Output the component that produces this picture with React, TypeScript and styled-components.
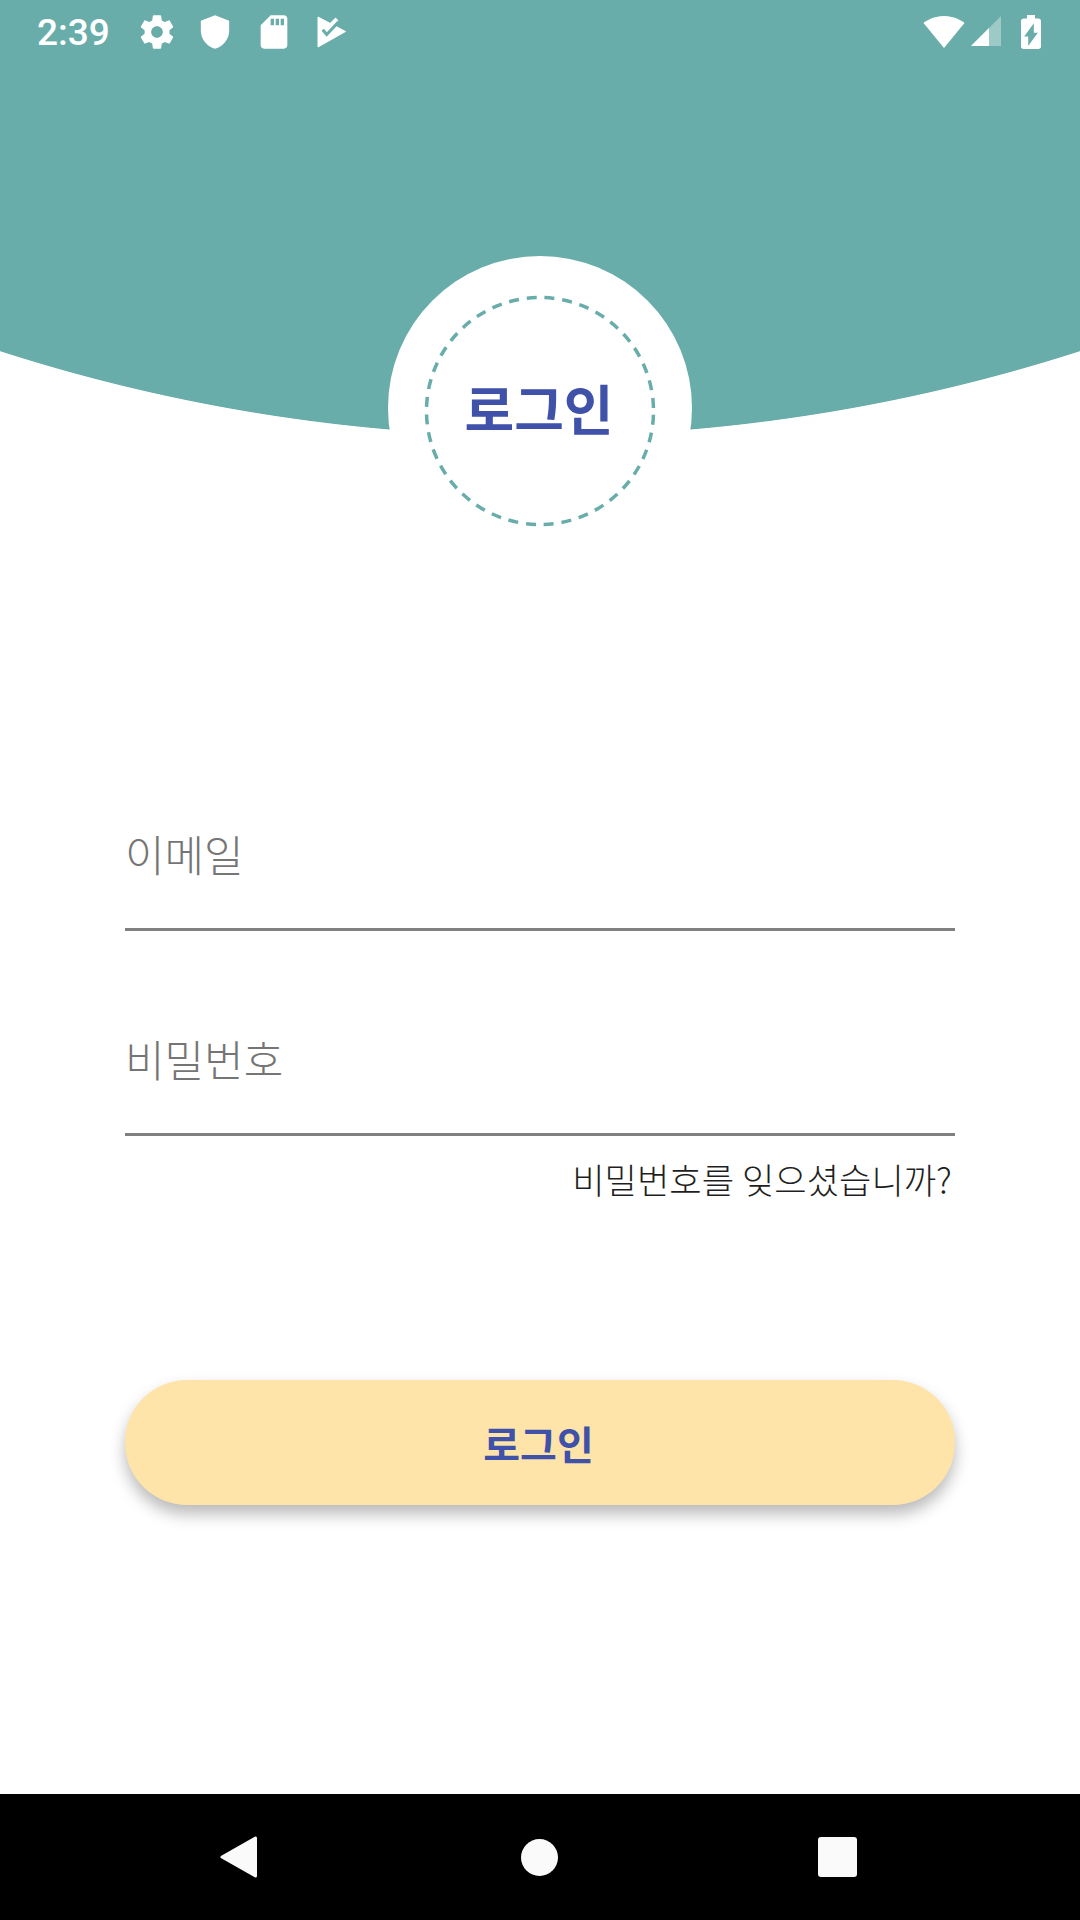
import styled, { createGlobalStyle } from 'styled-components';

const TEAL = '#69adaa';
const INDIGO = '#3f51a9';
const CJK = '"Noto Sans CJK KR", "Noto Sans", sans-serif';

const GlobalStyle = createGlobalStyle`
  html, body {
    margin: 0;
    padding: 0;
    background: #fff;
  }
`;

const Page = styled.div`
  width: 1080px;
  height: 1920px;
  display: flex;
  flex-direction: column;
  overflow: hidden;
  background: #fff;
  font-family: ${CJK};
`;

const Hero = styled.header`
  height: 560px;
  flex-shrink: 0;
  display: flex;
  flex-direction: column;
  align-items: center;
  background: radial-gradient(circle 1762px at 50% -1325.6px, ${TEAL} 99.95%, transparent 100%);
`;

const StatusBar = styled.div`
  width: 100%;
  height: 63px;
  box-sizing: border-box;
  padding: 0 39px 0 37px;
  display: flex;
  align-items: center;
  color: #fff;
`;

const Time = styled.span`
  width: 99.5px;
  padding-top: 2px;
  font-family: Roboto, sans-serif;
  font-size: 37px;
  font-weight: 500;
  line-height: 61px;
`;

const Notifications = styled.div`
  display: flex;
  align-items: center;
  gap: 18.5px;
`;

const SystemIcons = styled.div`
  margin-left: auto;
  display: flex;
  align-items: center;
`;

const Badge = styled.div`
  margin-top: 193px;
  width: 304px;
  height: 304px;
  flex-shrink: 0;
  border-radius: 50%;
  background: #fff;
  display: flex;
  align-items: center;
  justify-content: center;
  position: relative;
`;

const Ring = styled.svg`
  position: absolute;
  top: 37px;
  left: 34px;
`;

const Title = styled.h1`
  margin: 0 2px 0 0;
  font-size: 54px;
  font-weight: 700;
  line-height: 1;
  color: ${INDIGO};
`;

const Form = styled.form`
  padding: 0 125px;
  display: flex;
  flex-direction: column;
`;

const Field = styled.div<{ $top: number }>`
  height: 120px;
  margin-top: ${(p) => p.$top}px;
  border-bottom: 3px solid #808080;
  display: flex;
  align-items: flex-start;
`;

const Placeholder = styled.span`
  padding-top: 24px;
  font-size: 43px;
  font-weight: 300;
  line-height: 1;
  color: #757575;
`;

const Forgot = styled.a`
  align-self: flex-end;
  margin-top: 19px;
  padding-right: 3px;
  font-size: 35.2px;
  font-weight: 300;
  line-height: 48px;
  color: #1f1f1f;
`;

const SubmitButton = styled.button`
  margin-top: 177px;
  height: 125px;
  padding: 0 3px 0 0;
  border: 0;
  border-radius: 62px;
  background: #fee4a9;
  box-shadow: 0 9px 16px rgba(0, 0, 0, 0.28);
  font-family: ${CJK};
  font-size: 40px;
  font-weight: 700;
  color: ${INDIGO};
`;

const NavBar = styled.nav`
  margin-top: auto;
  height: 126px;
  flex-shrink: 0;
  box-sizing: border-box;
  padding-left: 220px;
  background: #000;
  display: flex;
  align-items: center;
  gap: 260px;
`;

const NavCircle = styled.span`
  width: 37px;
  height: 37px;
  border-radius: 50%;
  background: #fafafa;
`;

const NavSquare = styled.span`
  width: 39px;
  height: 40px;
  border-radius: 3px;
  background: #fafafa;
`;

function Icon({ d }: { d: string }) {
  return (
    <svg width="40" height="40" viewBox="0 0 24 24" fill="#fff">
      <path d={d} />
    </svg>
  );
}

const GEAR =
  'M19.43 12.98c.04-.32.07-.64.07-.98s-.03-.66-.07-.98l2.11-1.65c.19-.15.24-.42.12-.64l-2-3.46c-.12-.22-.39-.3-.61-.22l-2.49 1c-.52-.4-1.08-.73-1.69-.98l-.38-2.65C14.46 2.18 14.25 2 14 2h-4c-.25 0-.46.18-.49.42l-.38 2.65c-.61.25-1.17.59-1.69.98l-2.49-1c-.23-.09-.49 0-.61.22l-2 3.46c-.13.22-.07.49.12.64l2.11 1.65c-.04.32-.07.65-.07.98s.03.66.07.98l-2.11 1.65c-.19.15-.24.42-.12.64l2 3.46c.12.22.39.3.61.22l2.49-1c.52.4 1.08.73 1.69.98l.38 2.65c.03.24.24.42.49.42h4c.25 0 .46-.18.49-.42l.38-2.65c.61-.25 1.17-.59 1.69-.98l2.49 1c.23.09.49 0 .61-.22l2-3.46c.12-.22.07-.49-.12-.64l-2.11-1.65zM12 15.5c-1.93 0-3.5-1.57-3.5-3.5s1.57-3.5 3.5-3.5 3.5 1.57 3.5 3.5-1.57 3.5-3.5 3.5z';
const SHIELD = 'M12 2L3.5 5.2v5.9c0 5.1 3.6 9.8 8.5 10.9 4.9-1.1 8.5-5.8 8.5-10.9V5.2L12 2z';
const SD =
  'M18 2h-8L4.02 8 4 20c0 1.1.9 2 2 2h12c1.1 0 2-.9 2-2V4c0-1.1-.9-2-2-2zm-6 6h-2V4h2v4zm3 0h-2V4h2v4zm3 0h-2V4h2v4z';

export default function App() {
  return (
    <Page>
      <GlobalStyle />
      <Hero>
        <StatusBar>
          <Time>2:39</Time>
          <Notifications>
            <Icon d={GEAR} />
            <Icon d={SHIELD} />
            <Icon d={SD} />
            <svg width="40" height="40" viewBox="0 0 40 40" fill="none">
              <path d="M6 5 L33.5 19.5 L6 35 Z" fill="#fff" stroke="#fff" strokeWidth="1" strokeLinejoin="round" />
              <path d="M17 15 L25 7" stroke="#fff" strokeWidth="4" />
              <path d="M10.7 17.8 L14.7 22.5 L26.5 10" stroke={TEAL} strokeWidth="3" />
            </svg>
          </Notifications>
          <SystemIcons>
            <svg width="42" height="34" viewBox="0 0 42 34" fill="#fff" style={{ marginRight: 5 }}>
              <path d="M21 33 L41.5 8 C40 6.5 32 1 21 1 C10 1 2 6.5 .5 8 Z" />
            </svg>
            <svg width="32" height="32" viewBox="0 0 32 32" style={{ marginRight: 19 }}>
              <path d="M31 0 V30 H1 Z" fill="#fff" fillOpacity="0.35" />
              <path d="M19 12 V30 H1 Z" fill="#fff" />
            </svg>
            <svg width="20" height="34" viewBox="7 2 10 20" preserveAspectRatio="none" fill="#fff">
              <path d="M15.67 4H14V2h-4v2H8.33C7.6 4 7 4.6 7 5.33v15.33C7 21.4 7.6 22 8.33 22h7.33c.74 0 1.34-.6 1.34-1.33V5.33C17 4.6 16.4 4 15.67 4zM10.6 20.2v-5.6H8.6L13.4 6.8v5.6h2L10.6 20.2z" fillRule="evenodd" />
            </svg>
          </SystemIcons>
        </StatusBar>
        <Badge>
          <Ring width="236" height="236" viewBox="0 0 236 236">
            <circle
              cx="118"
              cy="118"
              r="113.5"
              fill="none"
              stroke={TEAL}
              strokeWidth="3.5"
              strokeDasharray="10 7.83"
              strokeDashoffset="-3.9"
            />
          </Ring>
          <Title>로그인</Title>
        </Badge>
      </Hero>
      <Form>
        <Field $top={248}>
          <Placeholder>이메일</Placeholder>
        </Field>
        <Field $top={82}>
          <Placeholder>비밀번호</Placeholder>
        </Field>
        <Forgot>비밀번호를 잊으셨습니까?</Forgot>
        <SubmitButton type="button">로그인</SubmitButton>
      </Form>
      <NavBar>
        <svg width="41" height="42" viewBox="0 0 41 42" fill="#fafafa" stroke="#fafafa" strokeWidth="3" strokeLinejoin="round">
          <path d="M2 21 L35.5 2 V40 Z" />
        </svg>
        <NavCircle />
        <NavSquare />
      </NavBar>
    </Page>
  );
}
